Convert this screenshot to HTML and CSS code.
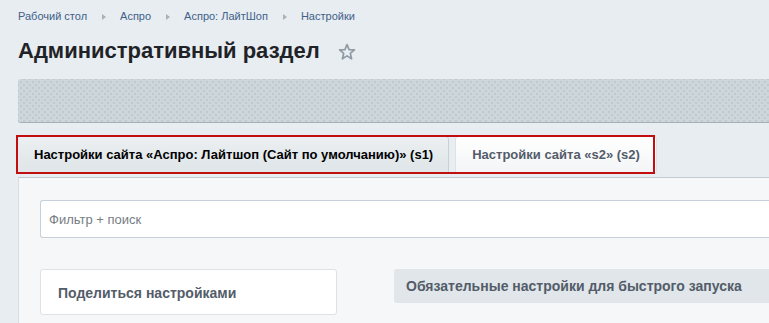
FILE: index.html
```html
<!DOCTYPE html>
<html>

<head>
    <meta charset="utf-8" />
    <title>Административный раздел</title>
    <meta name="viewport" content="width=device-width, initial-scale=1">
    <link rel="stylesheet" href="styles.css">
</head>

<body>
    <div class="page">

        <div class="breadcrumbs">
            <a class="crumb" href="#">Рабочий стол</a>
            <span class="crumb-sep"></span>
            <a class="crumb" href="#">Аспро</a>
            <span class="crumb-sep"></span>
            <a class="crumb" href="#">Аспро: ЛайтШоп</a>
            <span class="crumb-sep"></span>
            <a class="crumb" href="#">Настройки</a>
        </div>

        <div class="title-row">
            <h1 class="title">Административный раздел</h1>
            <svg class="star" width="18" height="18" viewBox="0 0 18 18">
                <polygon points="9,1.6 11.1,6.6 16.4,6.9 12.3,10.4 13.6,15.8 9,12.9 4.4,15.8 5.7,10.4 1.6,6.9 6.9,6.6"
                    fill="none" stroke="#8f9aa4" stroke-width="1.7" stroke-linejoin="round" />
            </svg>
        </div>

        <div class="toolbar"></div>

        <div class="tabs">
            <div class="tab tab-active">Настройки сайта «Аспро: Лайтшоп (Сайт по умолчанию)» (s1)</div>
            <div class="tab">Настройки сайта «s2» (s2)</div>
            <div class="tabs-mark"></div>
        </div>

        <div class="content">
            <input class="filter" type="text" placeholder="Фильтр + поиск">

            <div class="row">
                <div class="share-card">Поделиться настройками</div>
                <div class="section-head">Обязательные настройки для быстрого запуска</div>
            </div>
        </div>

    </div>
</body>

</html>
```

FILE: styles.css
```css
body {
    margin: 0;
    background: #e7edf0;
    font-family: "Liberation Sans", Arial, sans-serif;
    overflow: hidden;
}

.page {
    padding-left: 18px;
    height: 323px;
    overflow: hidden;
}

.breadcrumbs {
    display: flex;
    align-items: center;
    padding-top: 10px;
    height: 13px;
    line-height: 13px;
    font-size: 11px;
}

.crumb {
    color: #41608a;
    text-decoration: none;
}

.crumb-sep {
    width: 0;
    height: 0;
    border-top: 3px solid transparent;
    border-bottom: 3px solid transparent;
    border-left: 4px solid #a9b2b9;
    margin: 0 14px 0 15px;
}

.title-row {
    display: flex;
    align-items: center;
    margin-top: 15px;
    height: 26px;
}

.title {
    margin: 0;
    font-size: 22px;
    line-height: 26px;
    font-weight: bold;
    color: #1f2327;
}

.star {
    margin-left: 18px;
    margin-top: 1px;
}

.toolbar {
    margin-top: 15px;
    height: 43px;
    background-color: #cdd6db;
    background-image: radial-gradient(circle, #c0c9ce 0.7px, transparent 1.1px),
        radial-gradient(circle, #c0c9ce 0.7px, transparent 1.1px);
    background-size: 6px 6px;
    background-position: 0 0, 3px 3px;
    border-bottom: 1px solid #a6b0b5;
    border-radius: 3px 0 0 3px;
}

.tabs {
    position: relative;
    display: flex;
    margin-top: 14px;
    margin-bottom: 5px;
}

.tab {
    height: 35px;
    line-height: 35px;
    padding: 0 16px;
    font-size: 13px;
    font-weight: bold;
    color: #535c69;
    background: linear-gradient(#ffffff, #f3f5f6);
    border-radius: 3px 3px 0 0;
    box-shadow: 0 0 0 1px #dde2e5;
    box-sizing: border-box;
}

.tab + .tab {
    margin-left: 8px;
}

.tab-active {
    color: #000;
    padding-right: 15px;
    background: linear-gradient(#ebeff1, #dfe5e8);
    box-shadow: 0 0 0 1px #c9d0d4;
}

/* red outline over the tabs */
.tabs-mark {
    position: absolute;
    left: -2px;
    top: -2px;
    width: 639px;
    height: 39px;
    box-sizing: border-box;
    border: 2px solid #c20e0e;
}

.content {
    background: #f5f7f9;
    border-top: 1px solid #c3cbd0;
    border-left: 1px solid #d7dde1;
    padding: 22px 0 0 21px;
    height: 145px;
}

.filter {
    display: block;
    width: 100%;
    height: 38px;
    box-sizing: border-box;
    border: 1px solid #c5d0da;
    border-right: none;
    border-radius: 3px 0 0 3px;
    background: #fff;
    padding: 0 8px;
    font-family: "Liberation Sans", Arial, sans-serif;
    font-size: 13px;
    outline: none;
}

.filter::placeholder {
    color: #767d84;
}

.row {
    display: flex;
    align-items: flex-start;
    margin-top: 31px;
}

.share-card {
    width: 297px;
    height: 46px;
    line-height: 46px;
    box-sizing: border-box;
    background: #fff;
    border: 1px solid #dce3e8;
    border-radius: 3px;
    padding-left: 17px;
    font-size: 14px;
    font-weight: bold;
    color: #535c69;
}

.section-head {
    flex: 1;
    margin-left: 57px;
    height: 34px;
    line-height: 34px;
    background: #e0e6e9;
    border-radius: 3px 0 0 3px;
    padding-left: 12px;
    font-size: 14px;
    font-weight: bold;
    color: #535c69;
}
```
